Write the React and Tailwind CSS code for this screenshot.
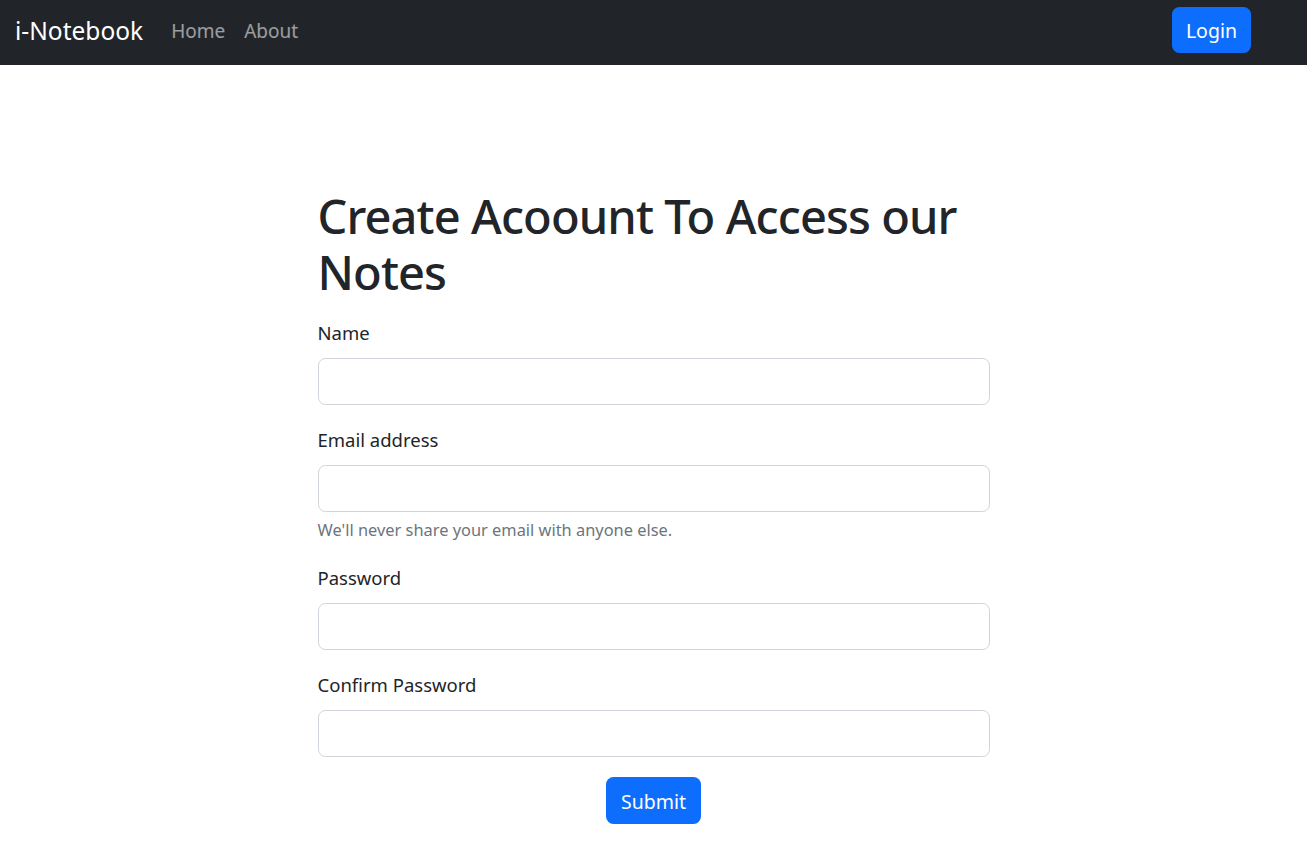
import React from "react";

const fields = [
    { id: "name", label: "Name", type: "text" },
    { id: "email", label: "Email address", type: "email", help: "We'll never share your email with anyone else." },
    { id: "password", label: "Password", type: "password" },
    { id: "cpassword", label: "Confirm Password", type: "password" },
];

export default function App() {
    return (
        <div className="min-h-screen bg-white text-[#212529] font-['Noto_Sans',sans-serif]">
            {/* Navbar */}
            <nav className="h-[65px] bg-[#212529] flex items-center pl-[15px] pr-[56px]">
                <div className="flex items-center mb-[2px]">
                    <a href="#" className="text-white text-[24.5px] leading-none mr-[28px]">i-Notebook</a>
                    <ul className="flex items-center gap-[19px] text-[19px] text-white/55">
                        <li><a href="#">Home</a></li>
                        <li><a href="#">About</a></li>
                    </ul>
                </div>
                <div className="ml-auto mb-[5px]">
                    <button className="h-[46px] px-[14px] pt-[2px] rounded-[7.5px] bg-[#0d6efd] text-white text-[19.5px]">Login</button>
                </div>
            </nav>

            {/* Signup form */}
            <div className="w-[672px] mx-auto pt-[123px]">
                <h1 className="text-[47px] leading-[56px] font-medium tracking-[-0.9px] mb-[18px]">Create Acoount To Access our Notes</h1>
                <form>
                    {fields.map((f) => (
                        <div key={f.id} className="mb-[20px]">
                            <label htmlFor={f.id} className="block text-[18.5px] leading-[30px] mb-[10px]">{f.label}</label>
                            <input id={f.id} type={f.type}
                                   className="block w-full h-[47px] border border-[#ced4da] rounded-[7.5px] px-[15px] text-[20px] outline-none" />
                            {f.help && (
                                <div className="mt-[5px] text-[16.4px] leading-[26px] text-[#6c757d]">{f.help}</div>
                            )}
                        </div>
                    ))}
                    <div className="text-center">
                        <button type="submit" className="h-[47px] px-[15px] pt-[2px] rounded-[7.5px] bg-[#0d6efd] text-white text-[19.5px]">Submit</button>
                    </div>
                </form>
            </div>
        </div>
    );
}
